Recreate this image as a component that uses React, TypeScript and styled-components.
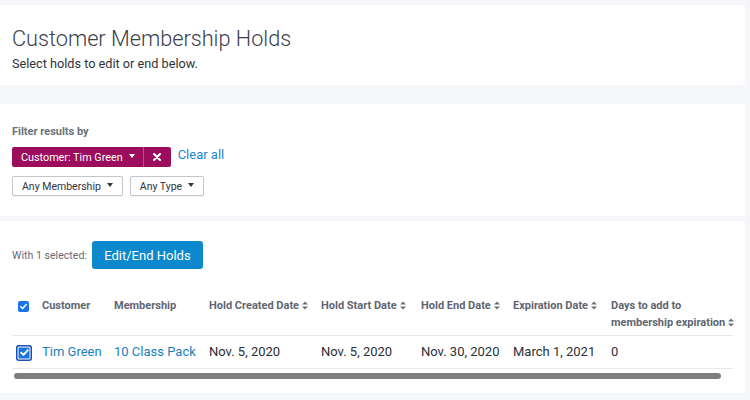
import React from "react";
import styled, { createGlobalStyle } from "styled-components";

const Global = createGlobalStyle`
  html, body { margin: 0; padding: 0; background: #f6f7fa; }
  body { font-family: Roboto, "Noto Sans", "Liberation Sans", sans-serif; color: #2f333a; }
  * { box-sizing: border-box; }
`;

const Page = styled.div`
  width: 750px;
  padding-top: 5px;
  display: flex;
  flex-direction: column;
`;

const Card = styled.section<{ $gap?: number }>`
  background: #ffffff;
  width: 745px;
  margin-bottom: ${(p) => p.$gap ?? 0}px;
`;

const Header = styled(Card)`
  padding: 20px 12px 0 12px;
  height: 80px;
`;

const Title = styled.h1`
  margin: 0;
  font-size: 21.7px;
  font-weight: 300;
  line-height: 28px;
  color: #3b404a;
`;

const Subtitle = styled.p`
  margin: 3px 0 0;
  font-size: 12.7px;
  line-height: 16px;
  color: #2f333a;
`;

const FilterCard = styled(Card)`
  padding: 21px 12px 20px;
  height: 112px;
  display: flex;
  flex-direction: column;
  gap: 9px;
`;

const FilterLabel = styled.div`
  font-size: 11px;
  font-weight: 700;
  color: #6b717c;
  line-height: 14px;
  margin-bottom: -1px;
`;

const Row = styled.div`
  display: flex;
  align-items: flex-start;
  gap: 7px;
  white-space: nowrap;
`;

const Chip = styled.div`
  display: flex;
  height: 20px;
  background: #9c0d5d;
  border-radius: 2px;
  color: #fff;
  font-size: 10.8px;
`;

const ChipMain = styled.div`
  display: flex;
  align-items: center;
  gap: 6px;
  padding: 0 8px 0 9px;
  border-right: 1px solid #b9537f;
`;

const ChipClose = styled.div`
  width: 27px;
  display: flex;
  align-items: center;
  justify-content: center;
`;

const Caret = styled.span<{ $color?: string }>`
  display: inline-block;
  flex: none;
  width: 0;
  height: 0;
  border-left: 3.5px solid transparent;
  border-right: 3.5px solid transparent;
  border-top: 4px solid ${(p) => p.$color ?? "#fff"};
  margin-top: -2px;
`;

const LinkButton = styled.a`
  font-size: 13px;
  color: #1b87cc;
  line-height: 14px;
  margin-top: 1px;
  cursor: pointer;
`;

const Select = styled.div`
  height: 20px;
  border: 1px solid #c4c6ca;
  border-radius: 2px;
  box-shadow: 0 1px 1px rgba(0, 0, 0, 0.06);
  display: flex;
  align-items: center;
  gap: 6px;
  padding: 0 9px 0 9px;
  font-size: 10.5px;
  color: #30343b;
  background: #fff;
`;

const TableCard = styled(Card)`
  margin-top: 5px;
  padding: 20px 12px 15px;
  height: 172px;
`;

const Toolbar = styled.div`
  display: flex;
  align-items: center;
  gap: 5px;
`;

const ToolbarLabel = styled.span`
  font-size: 10.6px;
  color: #666b75;
`;

const PrimaryButton = styled.button`
  height: 28px;
  width: 111px;
  background: #0c88cd;
  color: #fff;
  border: none;
  border-radius: 3px;
  font-family: inherit;
  font-size: 13px;
  padding: 0;
`;

const Table = styled.table`
  margin-top: 16px;
  width: 721px;
  border-collapse: collapse;
  table-layout: fixed;
`;

const Th = styled.th`
  text-align: left;
  vertical-align: top;
  padding: 12px 0 3px 0;
  font-size: 11px;
  font-weight: 700;
  line-height: 17px;
  white-space: nowrap;
  color: #5f6571;
`;

const Td = styled.td<{ $link?: boolean }>`
  padding: 7px 0;
  font-size: 13px;
  line-height: 17px;
  white-space: nowrap;
  color: ${(p) => (p.$link ? "#1b7fbd" : "#2b2f36")};
  border-top: 1px solid #e6e8eb;
  border-bottom: 1px solid #e6e8eb;
  vertical-align: middle;
`;

const Check = styled.span<{ $big?: boolean }>`
  display: inline-flex;
  align-items: center;
  justify-content: center;
  width: ${(p) => (p.$big ? 16 : 11)}px;
  height: ${(p) => (p.$big ? 16 : 11)}px;
  border-radius: ${(p) => (p.$big ? 3 : 2)}px;
  background: #1a74e6;
  box-shadow: ${(p) => (p.$big ? "inset 0 0 0 1.5px #1a4fb0, inset 0 0 0 2.5px #fff" : "none")};
  margin-left: ${(p) => (p.$big ? 4 : 6)}px;
  vertical-align: middle;
`;

const ScrollTrack = styled.div`
  margin-top: 4px;
  height: 6px;
  padding-left: 2px;
`;

const ScrollThumb = styled.div`
  width: 707px;
  height: 6px;
  border-radius: 3px;
  background: #7f7f7f;
`;

const SortWrap = styled.span`
  display: inline-block;
  margin-left: 3px;
  vertical-align: -1px;
`;

const Sort = () => (
  <SortWrap>
    <svg width="6" height="9" viewBox="0 0 6 9">
      <path d="M0 3.6 L3 0.4 L6 3.6 Z M0 5.4 L3 8.6 L6 5.4 Z" fill="#6a707b" />
    </svg>
  </SortWrap>
);

const Tick = ({ size }: { size: number }) => (
  <svg width={size} height={size} viewBox="0 0 10 10">
    <path d="M2 5.2 L4.1 7.2 L8 2.8" fill="none" stroke="#fff" strokeWidth="1.7" strokeLinecap="round" strokeLinejoin="round" />
  </svg>
);

const Close = () => (
  <svg width="8" height="8" viewBox="0 0 8 8">
    <path d="M1 1 L7 7 M7 1 L1 7" stroke="#fff" strokeWidth="2" strokeLinecap="round" />
  </svg>
);

const columns: { w: number; lines: string[]; sort?: boolean }[] = [
  { w: 30, lines: [] },
  { w: 72, lines: ["Customer"] },
  { w: 95, lines: ["Membership"] },
  { w: 112, lines: ["Hold Created Date"], sort: true },
  { w: 100, lines: ["Hold Start Date"], sort: true },
  { w: 92, lines: ["Hold End Date"], sort: true },
  { w: 98, lines: ["Expiration Date"], sort: true },
  { w: 122, lines: ["Days to add to", "membership expiration"], sort: true },
];

const row = [
  { v: "Tim Green", link: true },
  { v: "10 Class Pack", link: true },
  { v: "Nov. 5, 2020" },
  { v: "Nov. 5, 2020" },
  { v: "Nov. 30, 2020" },
  { v: "March 1, 2021" },
  { v: "0" },
];

export default function App() {
  return (
    <>
      <Global />
      <Page>
        <Header $gap={19}>
          <Title>Customer Membership Holds</Title>
          <Subtitle>Select holds to edit or end below.</Subtitle>
        </Header>
        <FilterCard>
          <FilterLabel>Filter results by</FilterLabel>
          <Row>
            <Chip>
              <ChipMain>
                Customer: Tim Green <Caret />
              </ChipMain>
              <ChipClose>
                <Close />
              </ChipClose>
            </Chip>
            <LinkButton>Clear all</LinkButton>
          </Row>
          <Row>
            <Select>
              Any Membership <Caret $color="#30343b" />
            </Select>
            <Select>
              Any Type <Caret $color="#30343b" />
            </Select>
          </Row>
        </FilterCard>
        <TableCard>
          <Toolbar>
            <ToolbarLabel>With 1 selected:</ToolbarLabel>
            <PrimaryButton>Edit/End Holds</PrimaryButton>
          </Toolbar>
          <Table>
            <colgroup>
              {columns.map((c, i) => (
                <col key={i} style={{ width: c.w }} />
              ))}
            </colgroup>
            <thead>
              <tr>
                <Th>
                  <Check>
                    <Tick size={9} />
                  </Check>
                </Th>
                {columns.slice(1).map((c) => (
                  <Th key={c.lines.join(" ")}>
                    {c.lines.map((l, i) => (
                      <React.Fragment key={l}>
                        {i > 0 && <br />}
                        {l}
                      </React.Fragment>
                    ))}
                    {c.sort && <Sort />}
                  </Th>
                ))}
              </tr>
            </thead>
            <tbody>
              <tr>
                <Td>
                  <Check $big>
                    <Tick size={11} />
                  </Check>
                </Td>
                {row.map((c, i) => (
                  <Td key={i} $link={c.link}>
                    {c.v}
                  </Td>
                ))}
              </tr>
            </tbody>
          </Table>
          <ScrollTrack>
            <ScrollThumb />
          </ScrollTrack>
        </TableCard>
      </Page>
    </>
  );
}
